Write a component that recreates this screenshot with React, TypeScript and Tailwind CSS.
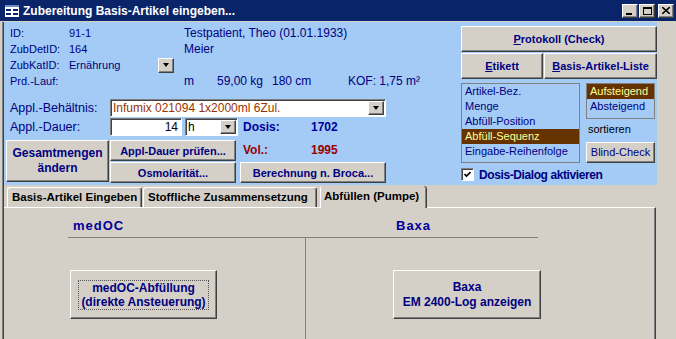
import React from "react";

const raised =
  "border border-t-white border-l-white border-r-[#404040] border-b-[#404040] shadow-[inset_-1px_-1px_0_#808080] bg-[#d4d0c8]";
const sunken =
  "border border-t-[#808080] border-l-[#808080] border-r-white border-b-white shadow-[inset_1px_1px_0_#404040] bg-white";

function DropButton({ className = "" }: { className?: string }) {
  return (
    <div className={`${raised} flex items-center justify-center ${className}`}>
      <div className="w-0 h-0 border-x-[3.5px] border-x-transparent border-t-[4px] border-t-black" />
    </div>
  );
}

function WinButton({ className = "", children }: { className?: string; children: React.ReactNode }) {
  return (
    <div className={`${raised} flex items-center justify-center text-center text-[11px] font-bold text-[#000080] leading-[14px] ${className}`}>
      {children}
    </div>
  );
}

function TitleButtons() {
  return (
    <div className="flex items-center gap-[1px] mr-[2px]">
      <div className={`${raised} w-[16px] h-[14px] flex items-end justify-center pb-[2px]`}>
        <div className="w-[6px] h-[2px] bg-black ml-[-2px]" />
      </div>
      <div className={`${raised} w-[16px] h-[14px] flex items-center justify-center`}>
        <div className="w-[9px] h-[8px] border border-black border-t-2" />
      </div>
      <div className={`${raised} w-[16px] h-[14px] ml-[2px] flex items-center justify-center`}>
        <svg width="8" height="7" viewBox="0 0 8 7">
          <path d="M0 0 L8 7 M8 0 L0 7" stroke="black" strokeWidth="1.6" />
        </svg>
      </div>
    </div>
  );
}

const sortFields = ["Artikel-Bez.", "Menge", "Abfüll-Position", "Abfüll-Sequenz", "Eingabe-Reihenfolge"];

export default function App() {
  return (
    <div className="w-[676px] h-[339px] overflow-hidden bg-[#d4d0c8] font-['Liberation_Sans',Arial,sans-serif] text-[#000080]">
      {/* title bar */}
      <div className="h-[21px] bg-[#0a246a] flex items-center">
        <svg width="16" height="14" viewBox="0 0 16 14" className="ml-[4px] mr-[3px]">
          <rect x="0.5" y="0.5" width="15" height="13" fill="white" stroke="#0a246a" />
          <rect x="1" y="1" width="14" height="2" fill="#6b8cc7" />
          <rect x="2" y="5" width="5" height="2" fill="#0a246a" />
          <rect x="9" y="5" width="5" height="2" fill="#0a246a" />
          <rect x="2" y="9" width="5" height="2" fill="#0a246a" />
          <rect x="9" y="9" width="5" height="2" fill="#0a246a" />
        </svg>
        <span className="text-white font-bold text-[12px] flex-1">Zubereitung Basis-Artikel eingeben...</span>
        <TitleButtons />
      </div>
      <div className="h-[1px] bg-[#d4d0c8]" />

      <div className="flex">
        <div className="w-[2px] bg-[#d4d0c8]" />
        <div className="w-[1px] bg-[#808080]" />
        <div className="w-[1px] bg-[#404040]" />

        <div className="w-[653px] flex flex-col">
          {/* header */}
          <div className="h-[163px] bg-[#a3cbf5] flex">
            <div className="w-[457px] flex flex-col pt-[3px]">
              <div className="h-[16px] flex items-center pl-[6px] text-[11px]">
                <span className="w-[59px]">ID:</span>
                <span className="w-[115px]">91-1</span>
                <span className="text-[12px]">Testpatient, Theo (01.01.1933)</span>
              </div>
              <div className="h-[16px] flex items-center pl-[6px] text-[11px]">
                <span className="w-[59px]">ZubDetID:</span>
                <span className="w-[115px]">164</span>
                <span className="text-[12px]">Meier</span>
              </div>
              <div className="h-[16px] flex items-center pl-[6px] text-[11px]">
                <span className="w-[59px]">ZubKatID:</span>
                <span className="w-[89px]">Ernährung</span>
                <DropButton className="w-[16px] h-[15px]" />
              </div>
              <div className="h-[16px] flex items-center pl-[6px] text-[11px]">
                <span className="w-[59px]">Prd.-Lauf:</span>
                <span className="w-[115px]" />
                <span className="w-[33px] text-[12px]">m</span>
                <span className="w-[55px] text-[12px]">59,00 kg</span>
                <span className="w-[76px] text-[12px]">180 cm</span>
                <span className="text-[12px]">KOF: 1,75 m²</span>
              </div>

              <div className="mt-[10px] h-[18px] flex items-center pl-[6px]">
                <span className="w-[100px] text-[12.5px]">Appl.-Behältnis:</span>
                <div className={`${sunken} w-[276px] h-[18px] flex items-center`}>
                  <span className="flex-1 pl-[2px] text-[12px] text-[#993300]">Infumix 021094 1x2000ml 6Zul.</span>
                  <DropButton className="w-[16px] h-[14px] mr-[1px]" />
                </div>
              </div>

              <div className="mt-[1px] h-[18px] flex items-center pl-[6px]">
                <span className="w-[100px] text-[12.5px]">Appl.-Dauer:</span>
                <div className={`${sunken} w-[72px] h-[18px] flex items-center justify-end pr-[3px] text-[12px] text-black`}>14</div>
                <div className={`${sunken} ml-[3px] w-[53px] h-[18px] flex items-center`}>
                  <span className="flex-1 pl-[2px] text-[12px] text-black">h</span>
                  <DropButton className="w-[16px] h-[14px] mr-[1px]" />
                </div>
                <span className="ml-[5px] w-[68px] text-[12px] font-bold text-[#000099]">Dosis:</span>
                <span className="text-[12px] font-bold text-[#000099]">1702</span>
              </div>

              <div className="mt-[4px] pl-[2px] flex">
                <WinButton className="w-[103px] h-[42px] text-[12px] leading-[15px]">
                  Gesamtmengen
                  <br />
                  ändern
                </WinButton>
                <div className="ml-[1px] flex flex-col">
                  <WinButton className="w-[126px] h-[21px]">Appl-Dauer prüfen...</WinButton>
                  <WinButton className="mt-[1px] w-[126px] h-[21px]">Osmolarität...</WinButton>
                </div>
                <div className="ml-[4px] flex flex-col w-[146px]">
                  <div className="h-[20px] flex items-center pl-[3px] text-[12px] font-bold text-[#990000]">
                    <span className="w-[68px]">Vol.:</span>
                    <span>1995</span>
                  </div>
                  <WinButton className="mt-[2px] w-[146px] h-[21px]">Berechnung n. Broca...</WinButton>
                </div>
              </div>
            </div>

            {/* right column */}
            <div className="w-[196px] flex flex-col pt-[4px]">
              <WinButton className="w-[196px] h-[26px]">
                <span>
                  <u>P</u>rotokoll (Check)
                </span>
              </WinButton>
              <div className="mt-[1px] flex">
                <WinButton className="w-[82px] h-[26px]">
                  <span>
                    <u>E</u>tikett
                  </span>
                </WinButton>
                <WinButton className="ml-[1px] w-[113px] h-[26px]">
                  <span>
                    <u>B</u>asis-Artikel-Liste
                  </span>
                </WinButton>
              </div>
              <div className="mt-[4px] flex">
                <div className="w-[119px] h-[80px] border border-[#808080] text-[11px] flex flex-col">
                  {sortFields.map((f) => (
                    <div
                      key={f}
                      className={
                        f === "Abfüll-Sequenz"
                          ? "h-[15px] flex items-center pl-[3px] bg-[#663300] text-[#ffff99]"
                          : "h-[15px] flex items-center pl-[3px]"
                      }
                    >
                      {f}
                    </div>
                  ))}
                </div>
                <div className="ml-[6px] w-[69px] flex flex-col">
                  <div className="h-[36px] border border-[#808080] text-[11px] flex flex-col">
                    <div className="h-[15px] flex items-center pl-[3px] bg-[#663300] text-[#ffff99]">Aufsteigend</div>
                    <div className="h-[15px] flex items-center pl-[3px]">Absteigend</div>
                  </div>
                  <div className="h-[20px] flex items-center pl-[2px] text-[11px] text-black">sortieren</div>
                  <div className={`${raised} mt-[3px] h-[21px] flex items-center justify-center text-[11px]`}>Blind-Check</div>
                </div>
              </div>
              <div className="mt-[5px] h-[13px] flex items-center">
                <div className={`${sunken} w-[13px] h-[13px] flex items-center justify-center`}>
                  <svg width="7" height="7" viewBox="0 0 7 7">
                    <path d="M0.5 3 L2.5 5 L6.5 1" stroke="black" strokeWidth="1.6" fill="none" />
                  </svg>
                </div>
                <span className="ml-[5px] text-[12px] font-bold tracking-[-0.4px]">Dosis-Dialog aktivieren</span>
              </div>
            </div>
          </div>

          {/* tabs */}
          <div className="h-[22px] flex items-end pl-[3px] text-[11.5px] font-bold text-black">
            <div className="w-[135px] h-[20px] border-t border-l border-white border-r border-r-[#404040] shadow-[inset_-1px_0_0_#808080] rounded-t-[3px] flex items-center pl-[4px]">
              Basis-Artikel Eingeben
            </div>
            <div className="ml-[1px] w-[174px] h-[20px] border-t border-l border-white border-r border-r-[#404040] shadow-[inset_-1px_0_0_#808080] rounded-t-[3px] flex items-center pl-[4px]">
              Stoffliche Zusammensetzung
            </div>
            <div className="ml-[3px] w-[107px] h-[22px] -mb-[1px] relative bg-[#d4d0c8] border-l border-white border-r border-r-[#404040] shadow-[inset_-1px_0_0_#808080] rounded-t-[3px] flex items-start pt-[2px] pl-[3px]">
              Abfüllen (Pumpe)
            </div>
          </div>

          {/* tab panel */}
          <div className="h-[140px] border-t border-white border-r border-r-[#404040] shadow-[inset_-1px_0_0_#808080] mr-[1px] pl-[64px]">
            <div className="w-[470px] h-[30px] flex items-end border-b border-[#808080] text-[13px] font-bold text-[#000099] tracking-[1px]">
              <div className="w-[237px] pl-[5px] pb-[2px]">medOC</div>
              <div className="pl-[91px] pb-[2px]">Baxa</div>
            </div>
            <div className="flex h-[110px]">
              <div className="w-[237px] pt-[32px] pl-[2px]">
                <WinButton className="w-[147px] h-[49px] text-[12px]">
                  <div className="border border-dotted border-[#555] px-[2px] leading-[14px]">
                    medOC-Abfüllung
                    <br />
                    (direkte Ansteuerung)
                  </div>
                </WinButton>
              </div>
              <div className="border-l border-[#808080] pt-[32px] pl-[87px]">
                <WinButton className="w-[148px] h-[49px] text-[12px] leading-[15px]">
                  Baxa
                  <br />
                  EM 2400-Log anzeigen
                </WinButton>
              </div>
            </div>
          </div>
        </div>
      </div>
    </div>
  );
}
